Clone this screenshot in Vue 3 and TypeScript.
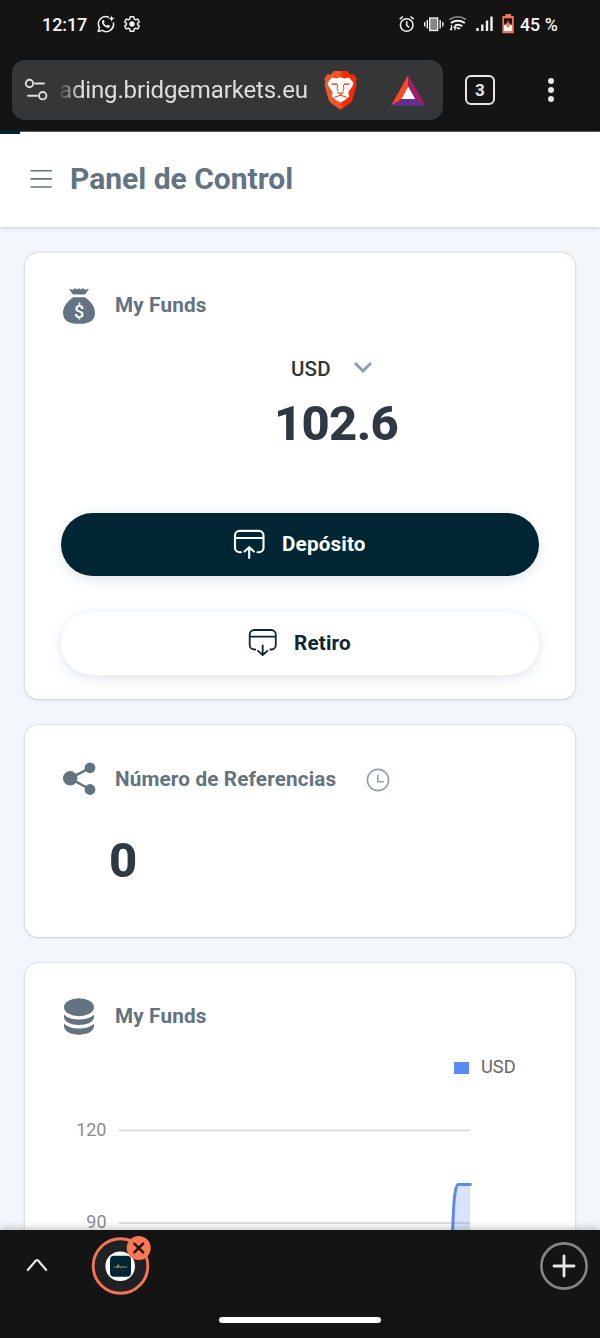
<script setup lang="ts">
interface Tick {
  label: string
  y: number
}

const balance = '102.6'
const references = 0
const ticks: Tick[] = [
  { label: '120', y: 1130.5 },
  { label: '90', y: 1223 },
]
</script>

<template>
  <div class="phone">
    <div class="status">
      <span class="time">12:17</span>
      <svg class="i-wa" width="20" height="20" viewBox="96 14 20 20" fill="none" stroke="#f1f1f1" stroke-width="1.5">
        <path d="M108.500 17.200a7.200 7.200 0 0 0-9 10.300l-1.300 4 4-1.100a7.300 7.300 0 0 0 11.200-7.400" stroke-linecap="round" stroke-linejoin="round" />
        <path d="M102.300 20.500c.7-.8 1.500-.5 1.800.3l.5 1.200-.7 1.100c.7 1.400 1.500 2.100 2.800 2.700l1.100-1 1.800.8c.7.4.3 1.700-.7 2.100-3.600.8-7.800-3.600-6.600-7.200z" fill="#f1f1f1" stroke="none" />
        <path d="M111.600 15.500l.8 2.300 2.300.8-2.300.8-.8 2.300-.8-2.300-2.300-.8 2.300-.8z" fill="#f1f1f1" stroke="none" />
      </svg>
      <svg class="i-gear" width="18" height="18" viewBox="-9 -9 18 18" fill="none" stroke="#f1f1f1" stroke-width="1.500" stroke-linejoin="round">
        <path d="M-1.700-7.200H1.700L2.300-5 3.700-4.200 5.800-4.900 7.300-2 5.500-.6V.6L7.300 2 5.800 4.900 3.700 4.200 2.300 5 1.700 7.200H-1.700L-2.300 5-3.700 4.200-5.800 4.900-7.300 2-5.500.6V-.6L-7.300-2-5.800-4.900-3.700-4.200-2.300-5z" />
        <circle r="2.700" fill="#f1f1f1" stroke="none" />
      </svg>
      <svg class="i-sys" width="118" height="22" viewBox="397 13 118 22" fill="none" stroke="#f1f1f1">
        <circle cx="406.700" cy="25" r="6.300" stroke-width="1.500" />
        <path d="M406.700 21.300v4l2.500 2.200" stroke-width="1.500" />
        <path d="M399.700 19.200l3.200-2.700M413.700 19.200l-3.200-2.700" stroke-width="1.600" />
        <rect x="429.700" y="18" width="8" height="12.500" fill="#858585" stroke-width="1.300" />
        <path d="M427.300 20v8.500M440.200 20v8.500M424.700 22v4.500M442.800 22v4.500" stroke-width="1.400" />
        <path d="M449.500 19.500q8.300-5.500 16.600 0" stroke="#8c8c8c" stroke-width="1.500" />
        <path d="M450.800 23q7-4.500 14 0M454.800 25.500q3.800-2 7.500.8M457 28.500q1.500-.8 3 .2" stroke-width="1.900" />
        <path d="M451.500 25v5m-1.500-1.300 1.500 1.500M455 30.300v-3.500m-1.500 1 1.500-1.500 1.500 1.500" stroke-width="1.300" />
        <path d="M477.500 31v-3M482.300 31v-6.500M487 31V20.500M491.500 31V16.500" stroke-width="2.400" />
        <path d="M505.500 14h5.500v2h2.800v17.200h-11.500V16h3.200z" fill="#f17650" stroke="none" />
        <rect x="504" y="18.300" width="8" height="6.200" fill="#171717" stroke="none" />
        <rect x="504" y="25" width="8" height="6" fill="#fff" stroke="none" />
        <path d="M508 21.500v6M505.300 24.500h5.400" stroke="#f17650" stroke-width="1.900" />
      </svg>
      <span class="percent">45 %</span>
    </div>

    <div class="toolbar">
      <div class="address">
        <svg class="i-tune" width="28" height="26" viewBox="23 77 28 26" fill="none" stroke="#dedede" stroke-width="1.900" stroke-linecap="round">
          <circle cx="29.500" cy="83.500" r="3.700" />
          <path d="M35 83.500h9M28 95.700h9" />
          <circle cx="42.700" cy="95.700" r="3.700" />
        </svg>
        <span class="url">ading.bridgemarkets.eu</span>
        <svg class="i-brave" width="34" height="40" viewBox="323 70 34 40">
          <defs>
            <linearGradient id="brave" x1="0" x2="1">
              <stop offset="0" stop-color="#f1562b" />
              <stop offset=".45" stop-color="#f1562b" />
              <stop offset=".6" stop-color="#ff2a00" />
              <stop offset="1" stop-color="#ff2500" />
            </linearGradient>
          </defs>
          <path d="M334 71h13l3.500 3.800 3-.6 3.300 4.300-1 3 .8 3-4 14.800q-.8 2.700-3 4.300l-9.100 6.200-9.100-6.200q-2.200-1.600-3-4.300L324.400 84.500l.8-3-1-3 3.300-4.300 3 .6z" fill="url(#brave)" />
          <path d="M332 77.600l4.500.9 4-1.200 4 1.200 4.500-.9 4.500 5.200-1.200 3.700-4 5.800 1 4.300-3.300 2.300-5.500.5-5.500-.5-3.300-2.300 1-4.300-4-5.800-1.200-3.700z" fill="#fff" />
          <path d="M334.500 97.800l6-3 6 3-1 2-5 2.800-5-2.800z" fill="#fff" />
          <path d="M331.500 84l5.500.3M349.500 84l-5.500.3" fill="none" stroke="#f5411b" stroke-width="1.500" />
          <path d="M337.600 84.500l-.5 4.500 1 2M343.400 84.500l.5 4.500-1 2" fill="none" stroke="#f5411b" stroke-width="1" />
          <path d="M337 92l3.500 1.200L344 92l-3.500 2.600z" fill="#f5411b" stroke="#f5411b" stroke-width=".6" />
          <path d="M340.500 94v2M334.500 97.300l6-2 6 2" fill="none" stroke="#f5411b" stroke-width="1.100" />
        </svg>
        <svg class="i-bat" width="35" height="31" viewBox="391 75 35 31">
          <path d="M408.200 75v12L402 99l-11 6.700z" fill="#ff4724" />
          <path d="M408.200 75l17.400 30.700L414.500 99l-6.300-12z" fill="#9e1f63" />
          <path d="M391 105.700L402 99h12.500l11.100 6.700z" fill="#662d91" />
          <path d="M408.200 86.500l7 12.500h-13.700z" fill="#fff" />
        </svg>
      </div>
      <span class="tabs">3</span>
      <svg class="i-dots" width="8" height="26" viewBox="0 0 8 26" fill="#e6e6e6">
        <circle cx="4" cy="4" r="3" />
        <circle cx="4" cy="13" r="3" />
        <circle cx="4" cy="22" r="3" />
      </svg>
    </div>

    <header class="header">
      <i class="progress" />
      <svg class="i-menu" width="23" height="20" viewBox="30 169 23 20" stroke="#637381" stroke-width="1.600" stroke-linecap="round">
        <path d="M31.200 170.800h20M31.200 178.900h20M31.200 187h20" />
      </svg>
      <h1>Panel de Control</h1>
    </header>

    <main class="content">
      <section class="card funds">
        <div class="card-head">
          <svg class="head-icon" width="36" height="40" viewBox="61 286 36 40" fill="#637381">
            <path d="M69 289q2.400 0 4 .9l1.600-1.600q2 .2 2.600 1.100l1.800-1.100 1.800 1.100q.6-.9 2.600-1.100L85 289.900q1.600-.9 4-.9l-4 5.600H73z" />
            <path d="M73 297.300h12c4.800 3.500 10 9 10 15.200 0 8-5 11.300-16 11.300s-16-3.300-16-11.300c0-6.200 5.200-11.700 10-15.200z" />
            <text x="79" y="317.500" text-anchor="middle" font-family="Roboto" font-size="18" font-weight="500" fill="#fff">$</text>
          </svg>
          <h2>My Funds</h2>
        </div>
        <div class="currency">
          <span>USD</span>
          <svg width="20" height="13" viewBox="0 0 20 13" fill="none" stroke="#919eab" stroke-width="3">
            <path d="M2 2l8 8 8-8" />
          </svg>
        </div>
        <strong class="amount">{{ balance }}</strong>
        <button class="pill deposit">
          <svg width="34" height="32" viewBox="232 528 34 32" fill="none" stroke="#fff" stroke-width="2.100" stroke-linecap="round" stroke-linejoin="round">
            <path d="M241 552.200h-1.500a4.500 4.500 0 0 1-4.500-4.500V535.400a4.500 4.500 0 0 1 4.500-4.500H259a4.500 4.500 0 0 1 4.500 4.500v12.300a4.500 4.500 0 0 1-4.500 4.500h-1.500M235 538h28.500M249.200 558v-10.500M244.500 551.500l4.700-4.300 4.700 4.300" />
          </svg>
          <span>Depósito</span>
        </button>
        <button class="pill withdraw">
          <svg width="30" height="29" viewBox="248 628 30 29" fill="none" stroke="#0b2833" stroke-width="1.800" stroke-linecap="round" stroke-linejoin="round">
            <path d="M255.200 649.500h-1a4.500 4.500 0 0 1-4.500-4.500v-10.500a4.500 4.500 0 0 1 4.500-4.500h17.100a4.500 4.500 0 0 1 4.500 4.500V645a4.500 4.500 0 0 1-4.500 4.500h-1M249.700 636.700h26.100M262.700 645.500v9.300M258 650.800l4.700 4.200 4.700-4.200" />
          </svg>
          <span>Retiro</span>
        </button>
      </section>

      <section class="card references">
        <div class="card-head">
          <svg class="head-icon" width="36" height="40" viewBox="61 759 36 40" fill="#637381" stroke="#637381">
            <circle cx="70.200" cy="778.300" r="7.200" stroke="none" />
            <circle cx="90" cy="767.800" r="5.400" stroke="none" />
            <circle cx="90" cy="789.500" r="5.400" stroke="none" />
            <path d="M90 767.800l-19.800 10.500L90 789.500" fill="none" stroke-width="2.500" />
          </svg>
          <h2>Número de Referencias</h2>
          <svg class="i-clock" width="24" height="24" viewBox="0 0 24 24" fill="none" stroke="#919eab" stroke-width="1.600">
            <circle cx="12" cy="12" r="10.600" />
            <path d="M11.800 6.700v7h6" />
          </svg>
        </div>
        <strong class="count">{{ references }}</strong>
      </section>

      <section class="card chart-card">
        <div class="card-head">
          <svg class="head-icon" width="36" height="40" viewBox="61 997 36 40" fill="#637381">
            <ellipse cx="79" cy="1007.200" rx="15" ry="9" />
            <path d="M64 1014.500c6 6.800 24 6.800 30 0v2.500c0 10.500-30 10.500-30 0z" />
            <path d="M64 1023.500c6 6.800 24 6.800 30 0v2.500c0 11.500-30 11.500-30 0z" />
          </svg>
          <h2>My Funds</h2>
        </div>
        <div class="legend"><i /><span>USD</span></div>
        <svg class="chart" width="414" height="130" viewBox="61 1110 414 130">
          <g v-for="tick in ticks" :key="tick.label">
            <text x="106.500" :y="tick.y + 5" text-anchor="end" class="tick">{{ tick.label }}</text>
            <path :d="`M119 ${tick.y}H470`" stroke="#d4d4d4" stroke-width="1.500" />
          </g>
          <path d="M452.500 1240Q453.500 1184.500 458 1184.500H470V1240z" fill="#588cf5" fill-opacity=".23" />
          <path d="M452.500 1240Q453.500 1184.500 458 1184.500H471.500" fill="none" stroke="#5c8bea" stroke-width="3" />
        </svg>
      </section>
    </main>

    <footer class="bottom">
      <svg class="i-up" width="22" height="14" viewBox="0 0 22 14" fill="none" stroke="#e6e6e6" stroke-width="2.200" stroke-linecap="round" stroke-linejoin="round">
        <path d="M1.800 12L9.700 2.700q1.300-1.400 2.600 0L20.200 12" />
      </svg>
      <svg class="i-tab" width="62" height="60" viewBox="91 1235 62 60">
        <circle cx="120.500" cy="1266" r="27.300" fill="#202124" stroke="#f47456" stroke-width="2.900" />
        <circle cx="120.200" cy="1266.300" r="14.800" fill="#fff" />
        <rect x="110" y="1255.700" width="21" height="21" rx="4" fill="#002633" />
        <path d="M114 1267.500q1-2 2 0 .5 1 1.500-1.500l1-1.500-.7 3.300q1.200-2.300 2.200-.8l1.300.7 1.200-1.700 1 1.500 1.200-1 .8 1 1.700-.9" fill="none" stroke="#b49b5f" stroke-width="1" />
        <circle cx="138.700" cy="1248" r="12" fill="#ff7654" />
        <path d="M134.300 1243.600l8.800 8.800M143.100 1243.600l-8.800 8.800" stroke="#171717" stroke-width="2.400" stroke-linecap="round" />
      </svg>
      <svg class="i-plus" width="48" height="48" viewBox="0 0 48 48" fill="none" stroke-linecap="round">
        <circle cx="24" cy="24" r="22.600" stroke="#858585" stroke-width="2.600" />
        <path d="M24 14v20M14 24h20" stroke="#e6e6e6" stroke-width="2.800" />
      </svg>
      <i class="handle" />
    </footer>
  </div>
</template>

<style>
body {
  margin: 0;
}
</style>

<style scoped>
.phone {
  width: 600px;
  height: 1338px;
  overflow: hidden;
  display: flex;
  flex-direction: column;
  background: #f3f7fb;
  font-family: Roboto, "Liberation Sans", sans-serif;
  color: #637381;
}
svg {
  display: block;
  flex: none;
}
span,
h1,
h2,
strong {
  white-space: nowrap;
}
.status {
  height: 48px;
  flex: none;
  display: flex;
  align-items: center;
  background: #141414;
  color: #f4f4f4;
  font-size: 18px;
  font-weight: 500;
}
.time {
  width: 54px;
  margin-left: 42px;
  letter-spacing: -0.1px;
}
.i-gear {
  margin-left: 7px;
}
.i-sys {
  margin-left: 256px;
}
.percent {
  margin-left: 5px;
  font-size: 17.800px;
}
.toolbar {
  height: 83px;
  flex: none;
  display: flex;
  align-items: flex-start;
  padding-top: 12px;
  box-sizing: border-box;
  background: #141414;
}
.address {
  width: 431px;
  height: 60px;
  margin-left: 12px;
  display: flex;
  align-items: center;
  border-radius: 13px;
  background: #353638;
}
.i-tune {
  margin-left: 11px;
}
.url {
  width: 251px;
  margin-left: 9px;
  font-size: 24px;
  letter-spacing: -0.15px;
  text-indent: -1px;
  line-height: 36px;
  color: #dedede;
  mask-image: linear-gradient(90deg, rgba(0, 0, 0, 0.1), #000 20px);
}
.i-brave {
  margin-left: 12px;
}
.i-bat {
  margin-left: 34px;
}
.tabs {
  width: 26px;
  height: 26px;
  margin: 15px 0 0 22px;
  border: 2px solid #e6e6e6;
  border-radius: 6px;
  color: #e6e6e6;
  font-size: 17px;
  font-weight: 700;
  line-height: 27px;
  text-align: center;
}
.i-dots {
  margin: 17px 0 0 52px;
}
.header {
  position: relative;
  height: 96px;
  flex: none;
  display: flex;
  align-items: center;
  padding-bottom: 2px;
  border-top: 1px solid #5a5a5a;
  box-sizing: border-box;
  background: #fff;
  box-shadow: 0 1px 4px rgba(60, 70, 80, 0.25);
}
.progress {
  position: absolute;
  left: 0;
  top: -1px;
  width: 20px;
  height: 3px;
  background: #002633;
}
.i-menu {
  margin-left: 30px;
}
h1 {
  margin: 0 0 0 17px;
  font-size: 30px;
  font-weight: 700;
  line-height: 40px;
}
.content {
  flex: 1;
  min-height: 0;
  margin-top: 4px;
  overflow: hidden;
  display: flex;
  flex-direction: column;
  gap: 26px;
  padding: 22px 25px 0;
}
.card {
  flex: none;
  display: flex;
  flex-direction: column;
  border-radius: 13px;
  background: #fff;
  box-shadow: 0 0 2px rgba(60, 70, 80, 0.28), 0 1px 3px rgba(60, 70, 80, 0.15);
}
.funds {
  height: 446px;
}
.references {
  height: 212px;
}
.chart-card {
  height: 330px;
}
.card-head {
  height: 40px;
  margin: 33px 0 0 36px;
  display: flex;
  align-items: center;
}
.references .card-head,
.chart-card .card-head {
  margin-top: 34px;
}
h2 {
  margin: 0 0 2px 18px;
  font-size: 20.700px;
  font-weight: 700;
  letter-spacing: 0.15px;
  line-height: 28px;
}
.references h2 {
  margin-bottom: 1px;
}
.currency {
  height: 24px;
  margin: 31px 0 0 266px;
  display: flex;
  align-items: center;
  gap: 22px;
  font-size: 20.500px;
  font-weight: 500;
  letter-spacing: 0.2px;
  color: #2f3439;
}
.currency svg {
  margin-bottom: 4px;
}
.amount {
  margin: 15px 0 0 249px;
  height: 56px;
  font-size: 49px;
  line-height: 56px;
  font-weight: 800;
  letter-spacing: -0.7px;
  color: #303943;
}
.pill {
  width: 478px;
  height: 63px;
  margin: 0 0 0 36px;
  padding: 0;
  display: flex;
  align-items: center;
  border: 0;
  border-radius: 32px;
  font: 700 20.700px/28px Roboto, "Liberation Sans", sans-serif;
  letter-spacing: 0.15px;
  box-shadow: 0 3px 13px rgba(80, 110, 140, 0.18);
}
.pill span {
  margin: 0 0 2px 16px;
}
.deposit {
  margin-top: 61px;
  background: #002633;
  color: #fff;
}
.deposit svg {
  margin: 0 0 2px 171px;
}
.withdraw {
  margin-top: 36px;
  background: #fff;
  color: #0b2833;
}
.withdraw svg {
  margin: 0 0 2px 187px;
}
.i-clock {
  margin: 1px 0 0 30px;
}
.count {
  margin: 34px 0 0 84px;
  font-size: 49px;
  line-height: 56px;
  font-weight: 800;
  color: #303943;
}
.legend {
  height: 24px;
  margin: 17px 0 0 429px;
  display: flex;
  align-items: center;
  gap: 12px;
  font-size: 18.300px;
  color: #666;
}
.legend i {
  width: 15px;
  height: 12px;
  margin-top: 3px;
  background: #588cf5;
}
.chart {
  margin: 32px 0 0 36px;
}
.tick {
  font-size: 18px;
  fill: #8c8c8c;
}
.bottom {
  position: relative;
  z-index: 1;
  height: 108px;
  flex: none;
  display: grid;
  grid-template-columns: 26px 22px 43px 62px 387px 48px;
  grid-template-rows: 60px 48px;
  align-items: start;
  background: #141414;
  box-shadow: 0 -2px 7px rgba(0, 0, 0, 0.22);
}
.i-up {
  grid-column: 2;
  margin-top: 28px;
}
.i-tab {
  grid-column: 4;
  margin-top: 5px;
}
.i-plus {
  grid-column: 6;
  margin-top: 12px;
}
.handle {
  grid-column: 1 / -1;
  grid-row: 2;
  width: 162px;
  height: 6px;
  margin: 27px 0 0 219px;
  border-radius: 3px;
  background: #fff;
}
</style>
